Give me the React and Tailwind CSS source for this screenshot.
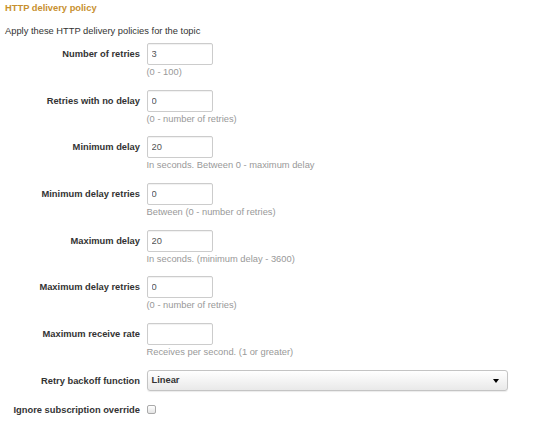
import React from 'react';

const FIELDS = [
  { label: 'Number of retries', value: '3', help: '(0 - 100)' },
  { label: 'Retries with no delay', value: '0', help: '(0 - number of retries)' },
  { label: 'Minimum delay', value: '20', help: 'In seconds. Between 0 - maximum delay' },
  { label: 'Minimum delay retries', value: '0', help: 'Between (0 - number of retries)' },
  { label: 'Maximum delay', value: '20', help: 'In seconds. (minimum delay - 3600)' },
  { label: 'Maximum delay retries', value: '0', help: '(0 - number of retries)' },
  { label: 'Maximum receive rate', value: '', help: 'Receives per second. (1 or greater)' },
];

const App = () => {
  return (
    <div className="min-h-[428px] bg-white pl-[5px] text-[9.33px] text-[#333] font-['Liberation_Sans',Arial,sans-serif]">
      <h2 className="font-bold leading-[16px] text-[#c8902f]">HTTP delivery policy</h2>
      <p className="mt-[7px] leading-[16px]">Apply these HTTP delivery policies for the topic</p>

      <div className="mt-[4px]">
        {FIELDS.map((f) => (
          <div key={f.label} className="flex mb-[10.67px]">
            <label className="w-[135px] shrink-0 text-right font-bold leading-[22px] h-[22px]">{f.label}</label>
            <div className="ml-[6.5px]">
              <input
                readOnly
                value={f.value}
                className="block w-[66px] h-[22px] px-[4px] border border-[#ccc] rounded-[2px] text-[#555] outline-none shadow-[inset_0_1px_1px_rgba(0,0,0,0.06)]"
              />
              <p className="leading-[14px] text-[#999]">{f.help}</p>
            </div>
          </div>
        ))}

        <div className="flex items-center">
          <label className="w-[135px] shrink-0 text-right font-bold leading-[22px]">Retry backoff function</label>
          <div className="ml-[6.5px] w-[361px] h-[21px] flex items-center justify-between pl-[4px] pr-[8px] border border-[#c4c4c4] rounded-[3px] bg-gradient-to-b from-white to-[#e9e9e9] shadow-[0_1px_1px_rgba(0,0,0,0.08)]">
            <span className="font-bold text-[#333]">Linear</span>
            <span className="w-0 h-0 border-l-[3px] border-r-[3px] border-t-[4px] border-l-transparent border-r-transparent border-t-black" />
          </div>
        </div>

        <div className="flex items-center mt-[7px]">
          <label className="w-[135px] shrink-0 text-right font-bold leading-[22px]">Ignore subscription override</label>
          <span className="ml-[6.5px] w-[9px] h-[9px] rounded-[2px] border border-[#aaa] bg-gradient-to-b from-white to-[#e4e4e4]" />
        </div>
      </div>
    </div>
  );
};

export default App;
